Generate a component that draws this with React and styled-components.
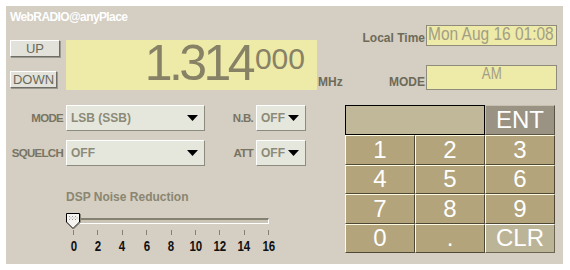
import React from 'react';
import styled, { createGlobalStyle } from 'styled-components';

const GlobalStyle = createGlobalStyle`
  body {
    margin: 0;
    background: #fff;
    font-family: "Liberation Sans", Arial, sans-serif;
  }
`;

const TICKS = [0, 2, 4, 6, 8, 10, 12, 14, 16];
const KEYS = ['1', '2', '3', '4', '5', '6', '7', '8', '9', '0', '.', 'CLR'];

const ArrowDown = () => (
  <svg width="11" height="6" viewBox="0 0 11 6">
    <polygon points="0,0 11,0 5.5,6" fill="#000" />
  </svg>
);

const Thumb = () => (
  <svg width="15" height="16" viewBox="0 0 15 16">
    <polygon points="0.5,0.5 13.5,0.5 13.5,9 7,15.5 0.5,9" fill="#f4f4f0" stroke="#000" />
    <polyline points="14.5,1 14.5,9.3 7.5,16" fill="none" stroke="#8a8678" />
    {[3, 6, 9].map(x => [3, 6].map(y => (
      <rect key={`${x}-${y}`} x={x} y={y} width="1" height="1" fill="#9a9a9a" />
    )))}
    {[4.5, 7.5, 10.5].map(x => (
      <rect key={x} x={x} y="4.5" width="1" height="1" fill="#9a9a9a" />
    ))}
  </svg>
);

const App = () => {
  return (
    <>
      <GlobalStyle />
      <Panel>
        <Title>WebRADIO@anyPlace</Title>

        <TopSection>
          <ButtonCol>
            <StepButton $width={50}>UP</StepButton>
            <StepButton $width={47}>DOWN</StepButton>
          </ButtonCol>

          <FreqDisplay>
            <FreqMain>1.314</FreqMain>
            <FreqSub>000</FreqSub>
          </FreqDisplay>
          <Unit>MHz</Unit>

          <InfoCol>
            <InfoRow>
              <InfoLabel>Local Time</InfoLabel>
              <InfoBox $height={21}>
                <InfoText $scale={0.86} $size={18}>Mon Aug 16 01:08</InfoText>
              </InfoBox>
            </InfoRow>
            <InfoRow>
              <InfoLabel>MODE</InfoLabel>
              <InfoBox $height={25} $center>
                <InfoText $scale={0.78} $size={17} $center>AM</InfoText>
              </InfoBox>
            </InfoRow>
          </InfoCol>
        </TopSection>

        <BottomSection>
          <LeftPane>
            <ControlGrid>
              <CtrlLabel>MODE</CtrlLabel>
              <Combo>
                <span>LSB (SSB)</span>
                <ArrowDown />
              </Combo>
              <CtrlLabel>N.B.</CtrlLabel>
              <Combo>
                <span>OFF</span>
                <ArrowDown />
              </Combo>

              <CtrlLabel>SQUELCH</CtrlLabel>
              <Combo>
                <span>OFF</span>
                <ArrowDown />
              </Combo>
              <CtrlLabel>ATT</CtrlLabel>
              <Combo>
                <span>OFF</span>
                <ArrowDown />
              </Combo>
            </ControlGrid>

            <SliderBlock>
              <SliderLabel>DSP Noise Reduction</SliderLabel>
              <TrackRow>
                <Track />
                <ThumbWrap>
                  <Thumb />
                </ThumbWrap>
              </TrackRow>
              <Scale>
                {TICKS.map(t => (
                  <Mark key={t}>
                    <Tick />
                    <TickLabel>{t}</TickLabel>
                  </Mark>
                ))}
              </Scale>
            </SliderBlock>
          </LeftPane>

          <Keypad>
            <KeyDisplay />
            <Key $variant="ent">ENT</Key>
            {KEYS.map(k => (
              <Key key={k} $variant={k === 'CLR' ? 'clr' : 'num'}>
                {k}
              </Key>
            ))}
          </Keypad>
        </BottomSection>
      </Panel>
    </>
  );
};

export default App;

const Panel = styled.div`
  width: 557px;
  height: 258px;
  margin: 6px;
  box-sizing: border-box;
  padding: 4px 6px 0 4px;
  background: #d4cec3;
  display: flex;
  flex-direction: column;
`;

const Title = styled.div`
  color: #fff;
  font-size: 12px;
  font-weight: bold;
  line-height: 14px;
  letter-spacing: -0.6px;
`;

const TopSection = styled.div`
  display: flex;
  height: 65px;
  margin-top: 1px;
`;

const ButtonCol = styled.div`
  display: flex;
  flex-direction: column;
  align-items: flex-start;
  gap: 14px;
  width: 50px;
  padding-top: 15px;
`;

const StepButton = styled.button`
  width: ${p => p.$width}px;
  height: 17px;
  padding: 0;
  box-sizing: border-box;
  background: #e2e2da;
  border: 1px solid;
  border-color: #fff #6e6e66 #6e6e66 #fff;
  box-shadow: 1px 1px 0 #9a9a90;
  color: #6a6a58;
  font-family: "Liberation Sans", Arial, sans-serif;
  font-size: 13px;
  line-height: 15px;
`;

const FreqDisplay = styled.div`
  display: flex;
  justify-content: flex-end;
  align-items: flex-start;
  width: 251px;
  height: 50px;
  margin: 15px 0 0 6px;
  padding-right: 12px;
  box-sizing: border-box;
  background: #eeeaa8;
  color: #878166;
`;

const FreqMain = styled.span`
  font-size: 50px;
  line-height: 46px;
  letter-spacing: -3.6px;
`;

const FreqSub = styled.span`
  font-size: 30px;
  line-height: 30px;
  margin-top: 4px;
  margin-left: 3px;
`;

const Unit = styled.div`
  align-self: flex-end;
  margin: 0 0 1px 1px;
  font-size: 12px;
  font-weight: bold;
  line-height: 14px;
  color: #6e6a58;
`;

const InfoCol = styled.div`
  margin-left: auto;
  display: flex;
  flex-direction: column;
  justify-content: space-between;
  align-items: flex-end;
`;

const InfoRow = styled.div`
  display: flex;
  align-items: flex-end;
  gap: 1px;
`;

const InfoLabel = styled.div`
  margin-bottom: 1px;
  font-size: 12px;
  font-weight: bold;
  line-height: 14px;
  color: #6e6a58;
`;

const InfoBox = styled.div`
  width: 131px;
  height: ${p => p.$height}px;
  box-sizing: border-box;
  border: 1px solid #908c7c;
  background: #eeeaa8;
  overflow: hidden;
  display: flex;
  justify-content: ${p => (p.$center ? 'center' : 'flex-start')};
  padding-left: ${p => (p.$center ? 0 : 1)}px;
`;

const InfoText = styled.span`
  display: inline-block;
  white-space: nowrap;
  font-size: ${p => p.$size}px;
  line-height: 16px;
  color: #a29e86;
  transform: scaleX(${p => p.$scale});
  transform-origin: ${p => (p.$center ? 'center' : 'left')} top;
`;

const BottomSection = styled.div`
  display: flex;
  margin-top: 15px;
`;

const LeftPane = styled.div`
  display: flex;
  flex-direction: column;
`;

const ControlGrid = styled.div`
  display: grid;
  grid-template-columns: 53px 139px 45px 50px;
  grid-auto-rows: 26px;
  column-gap: 3px;
  row-gap: 9px;
  align-items: center;
`;

const CtrlLabel = styled.div`
  text-align: right;
  white-space: nowrap;
  font-size: 11.5px;
  font-weight: bold;
  letter-spacing: -0.7px;
  color: #787462;
`;

const Combo = styled.div`
  height: 26px;
  box-sizing: border-box;
  display: flex;
  align-items: center;
  justify-content: space-between;
  padding: 0 6px 0 4px;
  background: #e5e7dd;
  border: 1px solid;
  border-color: #fff #8a8a7e #8a8a7e #fff;
  font-size: 12px;
  font-weight: bold;
  color: #8c8a78;
`;

const SliderBlock = styled.div`
  width: 203px;
  margin: 24px 0 0 56px;
`;

const SliderLabel = styled.div`
  font-size: 12px;
  font-weight: bold;
  line-height: 14px;
  color: #8a8670;
`;

const TrackRow = styled.div`
  position: relative;
  height: 16px;
  margin-top: 8px;
  padding-top: 6px;
  box-sizing: border-box;
`;

const Track = styled.div`
  height: 6px;
  margin-left: 8px;
  box-sizing: border-box;
  background: #cbc5b8;
  border: 1px solid;
  border-width: 2px 1px 1px 1px;
  border-color: #858170 #fff #fff #858170;
`;

const ThumbWrap = styled.div`
  position: absolute;
  left: 0;
  top: 1px;
  line-height: 0;
`;

const Scale = styled.div`
  display: flex;
  justify-content: space-between;
  width: 196px;
  margin: 2px 0 0 7px;
`;

const Mark = styled.div`
  width: 1px;
  display: flex;
  flex-direction: column;
  align-items: center;
`;

const Tick = styled.div`
  width: 1px;
  height: 5px;
  background: #868272;
`;

const TickLabel = styled.div`
  margin-top: 3px;
  font-size: 14px;
  font-weight: bold;
  line-height: 16px;
  color: #111;
  white-space: nowrap;
  transform: scaleX(0.82);
`;

const KEY_STYLES = {
  num: { bg: '#b3a47b', light: '#fffbe0', dark: '#4e4834' },
  ent: { bg: '#9a9282', light: '#c8c0b0', dark: '#5a5444' },
  clr: { bg: '#bcb497', light: '#ffffff', dark: '#6a6450' },
};

const Keypad = styled.div`
  margin: 0 2px 0 auto;
  display: grid;
  grid-template-columns: repeat(3, 70px);
  grid-template-rows: 30px repeat(4, 29.5px);
`;

const KeyDisplay = styled.div`
  grid-column: span 2;
  background: #c0b898;
  border: 1px solid #000;
`;

const Key = styled.div`
  display: flex;
  align-items: center;
  justify-content: center;
  box-sizing: border-box;
  background: ${p => KEY_STYLES[p.$variant].bg};
  border: 1px solid;
  border-color: ${p => `${KEY_STYLES[p.$variant].light} ${KEY_STYLES[p.$variant].dark} ${KEY_STYLES[p.$variant].dark} ${KEY_STYLES[p.$variant].light}`};
  color: #fff;
  font-size: 24px;
  line-height: 24px;
`;
